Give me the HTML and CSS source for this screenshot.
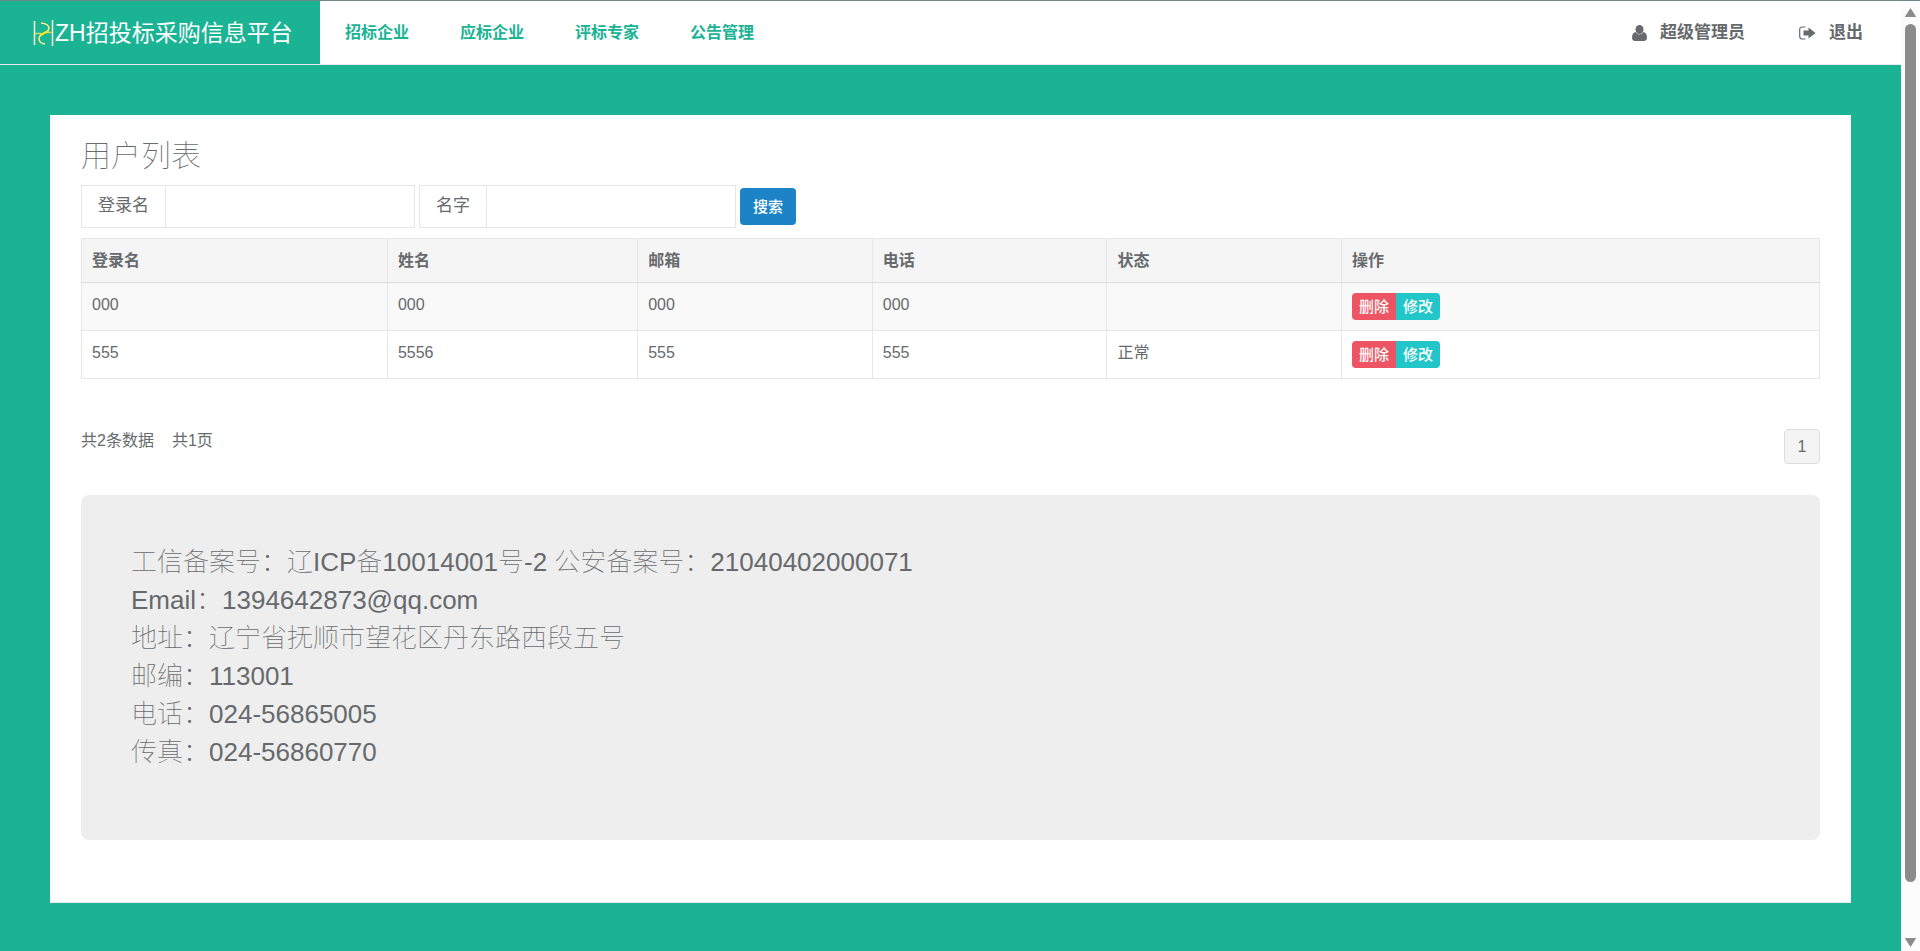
FILE: index.html
```html
<!DOCTYPE html>
<html lang="zh-CN">
<head>
    <meta charset="UTF-8">
    <title>ZH招投标采购信息平台</title>
    <link rel="stylesheet" href="styles.css">
</head>
<body>
    <div class="page">
        <nav class="navbar">
            <a class="brand" href="#">
                <svg class="logo" width="22" height="26" viewBox="0 0 22 26" fill="none" stroke-width="1.5">
                    <path d="M1.500 1V25M19.500 0V26" stroke="#f8f9c4"/>
                    <path d="M2 13.500H8M13 12.500H19" stroke="#c5dc6a"/>
                    <path d="M8 3C12 3.500 16 5 16 8C16 11 13 12 11 13C8 14.500 6 16 6 19C6 22 9 23.500 12 24" stroke="#f6ef7e"/>
                    <path d="M7 15.500C9 14 13 12.500 15.500 11" stroke="#ffe51f" stroke-width="2"/>
                </svg><span>ZH招投标采购信息平台</span>
            </a>
            <ul class="menu">
                <li><a href="#">招标企业</a></li>
                <li><a href="#">应标企业</a></li>
                <li><a href="#">评标专家</a></li>
                <li><a href="#">公告管理</a></li>
            </ul>
            <ul class="user-menu">
                <li><a href="#">
                    <svg width="15" height="16" viewBox="0 0 15 16" fill="currentColor"><ellipse cx="7.500" cy="4.500" rx="4" ry="4.500"/><path d="M3.500 7C1 7.500 0 10 0 12.500C0 14.500 1 16 3 16H12C14 16 15 14.500 15 12.500C15 10 14 7.500 11.500 7C10.500 8.500 9 9.500 7.500 9.500C6 9.500 4.500 8.500 3.500 7Z"/></svg>
                    <span>超级管理员</span>
                </a></li>
                <li><a href="#">
                    <svg width="17" height="14" viewBox="0 0 17 14"><path d="M6.500 1H3.500C1.500 1 .7 2 .7 3.500V10.500C.7 12 1.500 13 3.500 13H6.500" fill="none" stroke="currentColor" stroke-width="1.200"/><path d="M4.500 4.500H9.500V1.500L16.500 7L9.500 12.500V9.500H4.500Z" fill="currentColor"/></svg>
                    <span>退出</span>
                </a></li>
            </ul>
        </nav>

        <main class="wrapper">
            <div class="panel">
                <h2>用户列表</h2>
                <form class="search">
                    <div class="input-group">
                        <label for="loginName">登录名</label>
                        <input type="text" id="loginName">
                    </div>
                    <div class="input-group">
                        <label for="realName">名字</label>
                        <input type="text" id="realName">
                    </div>
                    <button type="button" class="btn-search">搜索</button>
                </form>

                <table class="users">
                    <thead>
                        <tr>
                            <th class="col-login">登录名</th>
                            <th class="col-name">姓名</th>
                            <th class="col-info">邮箱</th>
                            <th class="col-info">电话</th>
                            <th class="col-info">状态</th>
                            <th>操作</th>
                        </tr>
                    </thead>
                    <tbody>
                        <tr>
                            <td>000</td>
                            <td>000</td>
                            <td>000</td>
                            <td>000</td>
                            <td></td>
                            <td><div class="btn-group"><button class="btn-danger">删除</button><button class="btn-info">修改</button></div></td>
                        </tr>
                        <tr>
                            <td>555</td>
                            <td>5556</td>
                            <td>555</td>
                            <td>555</td>
                            <td>正常</td>
                            <td><div class="btn-group"><button class="btn-danger">删除</button><button class="btn-info">修改</button></div></td>
                        </tr>
                    </tbody>
                </table>

                <div class="pager">
                    <p><span>共2条数据</span><span>共1页</span></p>
                    <button class="page-no">1</button>
                </div>

                <footer class="jumbotron">
                    工信备案号：辽ICP备10014001号-2 公安备案号：21040402000071<br>
                    Email：1394642873@qq.com<br>
                    地址：辽宁省抚顺市望花区丹东路西段五号<br>
                    邮编：113001<br>
                    电话：024-56865005<br>
                    传真：024-56860770
                </footer>
            </div>
        </main>
    </div>

    <div class="scrollbar">
        <svg width="13" height="11" viewBox="0 0 13 11"><path d="M6.500 1L12 9.500Q12 10 11.500 10H1.500Q1 10 1 9.500Z"/></svg>
        <div class="track"><div class="thumb"></div></div>
        <svg width="13" height="11" viewBox="0 0 13 11"><path d="M6.500 10L12 1.500Q12 1 11.500 1H1.500Q1 1 1 1.500Z"/></svg>
    </div>
</body>
</html>
```

FILE: styles.css
```css
* { box-sizing: border-box; }
body {
    display: flex;
    min-height: 100vh;
    margin: 0;
    border-top: 1px solid #6c8784;
    border-bottom: 1px solid #000;
    background: #1ab394;
    color: #676a6c;
    font-family: "Liberation Sans", Arial, "Noto Sans CJK SC", sans-serif;
    font-size: 16px;
    line-height: 24px;
}
a { color: inherit; text-decoration: none; }
ul { display: flex; margin: 0; padding: 0; list-style: none; }
button { border: 0; color: #fff; font-family: inherit; font-size: 15px; font-weight: 500; line-height: 22px; cursor: pointer; }

.page { flex: 1; }

/* navbar */
.navbar { display: flex; align-items: center; height: 64px; background: #fff; border-bottom: 1px solid #e7eaec; }
.brand { display: flex; align-items: center; width: 320px; height: 63px; padding-left: 33px; background: #1ab394; color: #fff; font-size: 23px; white-space: nowrap; }
.logo { flex: none; }
.menu { gap: 51px; margin-left: 25px; color: #1ab394; font-weight: 600; }
.user-menu { gap: 54px; margin-left: auto; padding-right: 38px; font-size: 17px; font-weight: 600; }
.user-menu a { display: flex; align-items: center; gap: 13px; }

/* content */
.wrapper { padding: 50px 50px 48px; }
.panel { padding: 23px 31px 62px; background: #fff; border-bottom: 1px solid #e7eaec; }
h2 { margin: 0 0 11px; font-size: 30px; font-weight: 100; line-height: 36px; }

.search { display: flex; align-items: center; gap: 4px; margin-bottom: 10px; }
.input-group { display: flex; height: 43px; border: 1px solid #e5e6e7; }
.input-group label { padding: 8px 16px; border-right: 1px solid #e5e6e7; font-size: 17px; }
.input-group input { width: 248px; padding: 8px 15px; border: 0; background: #fff; color: inherit; font: inherit; }
.btn-search { height: 37px; padding: 0 13px; border-radius: 4px; background: #1c84c6; }

.users { width: 100%; border-collapse: collapse; table-layout: fixed; }
.users th, .users td { padding: 10px; border: 1px solid #e7e7e7; text-align: left; vertical-align: top; }
.users th { padding-bottom: 9px; border-bottom-color: #ddd; background: #f5f5f6; font-weight: 700; }
.users tbody tr:nth-child(odd) { background: #f9f9f9; }
.col-login { width: 17.6%; }
.col-name { width: 14.4%; }
.col-info { width: 13.5%; }
.btn-group { display: flex; }
.btn-group button { height: 27px; padding: 0 7px; }
.btn-danger { border-radius: 4px 0 0 4px; background: #ed5565; }
.btn-info { border-radius: 0 4px 4px 0; background: #23c6c8; }

.pager { display: flex; justify-content: space-between; margin: 50px 0 31px; }
.pager p { display: flex; gap: 18px; margin: 0; }
.page-no { width: 36px; height: 35px; border: 1px solid #ddd; border-radius: 4px; background: #f4f4f4; color: #676a6c; font-size: 16px; font-weight: 400; }

.jumbotron { padding: 48px 50px 69px; border-radius: 8px; background: #eee; font-size: 26px; font-weight: 100; line-height: 38px; }

/* scrollbar */
.scrollbar { display: flex; flex-direction: column; align-items: center; width: 19px; padding: 6px 0 3px; background: #fcfcfc; fill: #8b8b8b; }
.track { flex: 1; width: 11px; padding-top: 6px; }
.thumb { height: 94%; border-radius: 6px; background: #8b8b8b; }
```
